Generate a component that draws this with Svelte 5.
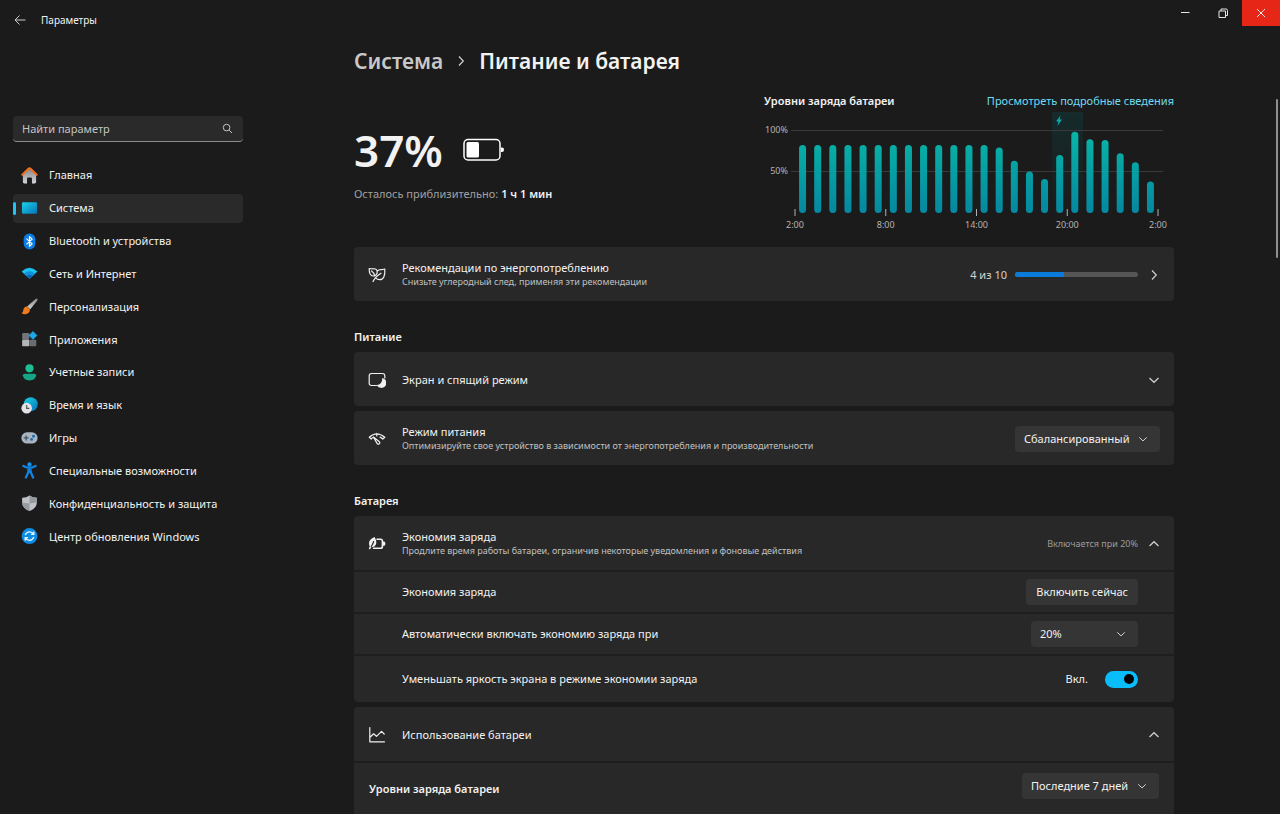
<script lang="ts">
	let search = $state('');
	let powerMode = $state('balanced');
	let saverLevel = $state('20');
	let period = $state('7');
	let dimScreen = $state(true);
	let activePage = $state('system');

	const pages = [
		{ id: 'home', label: 'Главная' },
		{ id: 'system', label: 'Система' },
		{ id: 'bluetooth', label: 'Bluetooth и устройства' },
		{ id: 'network', label: 'Сеть и Интернет' },
		{ id: 'personal', label: 'Персонализация' },
		{ id: 'apps', label: 'Приложения' },
		{ id: 'accounts', label: 'Учетные записи' },
		{ id: 'time', label: 'Время и язык' },
		{ id: 'games', label: 'Игры' },
		{ id: 'access', label: 'Специальные возможности' },
		{ id: 'privacy', label: 'Конфиденциальность и защита' },
		{ id: 'update', label: 'Центр обновления Windows' }
	];

	// battery level per hour, percent
	const levels = [82, 82, 82, 82, 82, 82, 82, 82, 82, 82, 82, 82, 82, 79, 63, 50, 41, 70, 98, 89, 88, 72, 61, 38];
	const hours = ['2:00', '8:00', '14:00', '20:00', '2:00'];
	const step = 363 / 24;

	const barHeight = (level: number) => level * 0.83;
</script>

{#snippet chevron(dir: string)}
	<svg class="chevron {dir}" viewBox="0 0 12 12" aria-hidden="true">
		<path d="M1.5 4 L6 8.3 L10.5 4" />
	</svg>
{/snippet}

{#snippet navIcon(id: string)}
	<svg class="nav-icon" viewBox="0 0 18 18" aria-hidden="true">
		{#if id === 'home'}
			<path d="M2 8 L9 2 L16 8 V16 Q16 17.5 14.5 17.5 H11.6 V12 Q11.6 11 10.6 11 H7.4 Q6.4 11 6.4 12 V17.5 H3.5 Q2 17.5 2 16Z" fill="url(#g-grey)" />
			<path d="M1.4 8.2 L8.2 1.7 Q9 1 9.8 1.7 L16.6 8.2" fill="none" stroke="#f4701c" stroke-width="2.2" stroke-linecap="round" stroke-linejoin="round" />
		{:else if id === 'system'}
			<rect x="1" y="2.5" width="16" height="12" rx="1.2" fill="url(#g-cyan)" />
		{:else if id === 'bluetooth'}
			<rect x="2.8" y=".4" width="12.4" height="17" rx="6.2" fill="#0a7ce4" />
			<path d="M5.8 6 L11.8 11.5 L9 14.2 V3.8 L11.8 6.5 L5.8 12" fill="none" stroke="#fff" stroke-width="1.3" stroke-linejoin="round" />
		{:else if id === 'network'}
			<path d="M.6 6.8 Q9 -1 17.4 6.8 L9 14.6Z" fill="#19c3ee" />
			<path d="M3.2 9.2 Q9 4 14.8 9.2 L9 14.6Z" fill="#1290da" />
			<path d="M6 11.8 Q9 9 12 11.8 L9 14.6Z" fill="#0b62b4" />
		{:else if id === 'personal'}
			<path d="M17 .6 Q18 1.6 17.1 2.8 L9.8 12 L6.4 9 L15.4 1 Q16.4 .3 17 .6Z" fill="url(#g-grey)" />
			<path d="M6.2 9.1 L9.5 12.2 Q9.2 16.7 4.5 17.2 Q2.4 17.3 .6 16.2 Q2.3 15.2 2.5 12.8 Q3 9.3 6.2 9.1Z" fill="#f47b1a" />
		{:else if id === 'apps'}
			<rect x="1.2" y="2" width="7.6" height="7.2" rx="1" fill="#70757b" />
			<rect x="1.2" y="9.2" width="7.6" height="7" rx="1" fill="#b4b6b9" />
			<rect x="8.8" y="9.2" width="7.4" height="7" rx="1" fill="#696d73" />
			<path d="M12.7 .6 L16.8 4.7 L12.7 8.8 L8.6 4.7Z" fill="#20a7e8" stroke="#20a7e8" stroke-linejoin="round" />
		{:else if id === 'accounts'}
			<circle cx="9" cy="4.6" r="4.3" fill="#1fbd94" />
			<path d="M4 10.2 H14 Q16 10.2 16 12 Q15.7 17.4 9 17.4 Q2.3 17.4 2 12 Q2 10.2 4 10.2Z" fill="#13a585" />
		{:else if id === 'time'}
			<circle cx="10.3" cy="7.7" r="7.4" fill="url(#g-cyan)" />
			<circle cx="6" cy="11.8" r="5.6" fill="#e1e3e6" />
			<path d="M6 8.6 V12 H8.8" fill="none" stroke="#555" stroke-width="1.2" />
		{:else if id === 'games'}
			<rect x=".4" y="2.4" width="17.2" height="12" rx="6" fill="#a9b4c0" />
			<path d="M5.5 5.8 V11 M2.9 8.4 H8.1" stroke="#49525d" stroke-width="1.4" />
			<circle cx="13.3" cy="6.6" r="1.5" fill="#1b6cae" />
			<circle cx="11.2" cy="10" r="1.5" fill="#1b6cae" />
		{:else if id === 'access'}
			<circle cx="9" cy="2.6" r="2.3" fill="#1690e8" />
			<path d="M2.6 4.2 Q9 8.2 15.4 4.2 M8.2 6.8 L7.6 11 L5.2 16.4 M9.8 6.8 L10.4 11 L12.8 16.4 M9 6.8 V10.5" fill="none" stroke="#1183df" stroke-width="2.5" stroke-linecap="round" stroke-linejoin="round" />
		{:else if id === 'privacy'}
			<path d="M9 .6 Q12 3 16.8 3 V8 Q16.6 14 9 17 Q1.4 14 1.2 8 V3 Q6 3 9 .6Z" fill="#bfc3c7" />
			<path d="M9 .6 Q12 3 16.8 3 V8 L9 9Z M1.2 8 L9 9 V17 Q1.4 14 1.2 8Z" fill="#969ba1" />
		{:else}
			<circle cx="9" cy="8.5" r="8.4" fill="#0d8ce4" />
			<path d="M4.4 7.5 Q5.8 4 9 4 Q12 4 13.4 6.5 M13.6 3.6 V6.7 H10.5 M13.6 9.5 Q12.2 13 9 13 Q6 13 4.6 10.5 M4.4 13.4 V10.3 H7.5" fill="none" stroke="#e8f6ff" stroke-width="1.3" />
		{/if}
	</svg>
{/snippet}

<svg class="defs" aria-hidden="true">
	<defs>
		<linearGradient id="g-grey" x1="0" y1="0" x2="0" y2="1">
			<stop offset="0" stop-color="#85898e" />
			<stop offset="1" stop-color="#d2d4d6" />
		</linearGradient>
		<linearGradient id="g-cyan" x1="0" y1="0" x2="1" y2="1">
			<stop offset="0" stop-color="#18d3e6" />
			<stop offset="1" stop-color="#0873b8" />
		</linearGradient>
	</defs>
</svg>

<div class="window">
	<header class="titlebar">
		<button class="back" aria-label="Назад">
			<svg viewBox="0 0 12 12"><path d="M11.5 6 H1 M5.5 1.5 L1 6 L5.5 10.5" /></svg>
		</button>
		<span class="app-name">Параметры</span>
		<div class="window-buttons">
			<button aria-label="Свернуть"><svg viewBox="0 0 10 10"><path d="M1 4.5 H9.5" /></svg></button>
			<button aria-label="Восстановить">
				<svg viewBox="0 0 10 10"><path d="M1 3 H7.5 V9.5 H1Z M3 3 V1 H8 Q9.5 1 9.5 2.5 V7.5 H7.5" /></svg>
			</button>
			<button class="close" aria-label="Закрыть"><svg viewBox="0 0 10 10"><path d="M1 1 L9 9 M9 1 L1 9" /></svg></button>
		</div>
	</header>

	<div class="body">
		<aside class="sidebar">
			<label class="search">
				<input type="text" placeholder="Найти параметр" aria-label="Найти параметр" bind:value={search} />
				<svg viewBox="0 0 12 12" aria-hidden="true"><circle cx="5" cy="5" r="3.6" /><path d="M7.7 7.7 L11 11" /></svg>
			</label>
			<nav>
				{#each pages as page (page.id)}
					<button class="nav-item" class:active={activePage === page.id} onclick={() => (activePage = page.id)}>
						{@render navIcon(page.id)}
						<span>{page.label}</span>
					</button>
				{/each}
			</nav>
		</aside>

		<main>
			<div class="content">
				<h1>
					<a href="#system">Система</a>
					{@render chevron('right')}
					<span>Питание и батарея</span>
				</h1>

				<section class="overview">
					<div class="charge">
						<div class="charge-level">
							<strong>37%</strong>
							<svg class="battery" viewBox="0 0 42 24" aria-hidden="true">
								<rect x="1" y="1.5" width="36" height="20.5" rx="4" fill="none" stroke="#fff" stroke-width="1.5" />
								<rect x="3.5" y="4" width="12.5" height="15.5" rx="1.5" fill="#fff" />
								<path d="M38 9.5 H39 Q41 9.5 41 11.7 Q41 14 39 14 H38Z" fill="#fff" />
							</svg>
						</div>
						<p>Осталось приблизительно: <b>1 ч 1 мин</b></p>
					</div>

					<div class="levels">
						<div class="levels-head">
							<h2>Уровни заряда батареи</h2>
							<a href="#details">Просмотреть подробные сведения</a>
						</div>
						<svg class="chart" viewBox="0 0 410 120" role="img" aria-label="Уровни заряда батареи">
							<defs>
								<linearGradient id="bar" gradientUnits="userSpaceOnUse" x1="0" y1="20" x2="0" y2="101">
									<stop offset="0" stop-color="#08b5a6" />
									<stop offset="1" stop-color="#0588a0" />
								</linearGradient>
								<linearGradient id="charging" x1="0" y1="0" x2="0" y2="1">
									<stop offset="0" stop-color="#152b2c" />
									<stop offset="1" stop-color="#1b1b1b" />
								</linearGradient>
							</defs>
							<rect x="288" y="0" width="31" height="101" fill="url(#charging)" />
							<path class="grid" d="M27 18.5 H399 M27 59.5 H399" />
							<text x="24" y="21" text-anchor="end">100%</text>
							<text x="24" y="62" text-anchor="end">50%</text>
							<path d="M296.5 3.5 L292 9.5 H294.5 L293.5 14 L298 7.5 H295.5Z" fill="#10a9b0" />
							{#each levels as level, i}
								<rect x={31 + (i + 0.5) * step - 3.5} y={101 - barHeight(level)} width="7" height={barHeight(level)} rx="3.5" fill="url(#bar)" />
							{/each}
							{#each hours as hour, i}
								<path class="tick" d="M{31 + i * 6 * step} 97 v7" />
								<text x={31 + i * 6 * step} y="116" text-anchor="middle">{hour}</text>
							{/each}
						</svg>
					</div>
				</section>

				<button class="card row recommend">
					<svg class="icon" viewBox="0 0 18 18" aria-hidden="true">
						<path d="M1.2 2.5 Q1 9.8 5.2 10 Q9 9.8 9.2 6 Q9 2.4 5.5 2.8 Q3 2.8 1.2 2.5Z M3.5 5 Q6 6.5 6.8 10 M9.2 5.2 Q10.5 3.6 13 3.6 Q15 3.6 16.8 3 Q17.4 13.5 11.8 13.7 Q9 13.7 7.8 12 M5 15.5 Q7.5 10.5 13 7.2" />
					</svg>
					<span class="text">
						<span>Рекомендации по энергопотреблению</span>
						<small>Снизьте углеродный след, применяя эти рекомендации</small>
					</span>
					<span class="count">4 из 10</span>
					<progress max="10" value="4" aria-label="4 из 10"></progress>
					{@render chevron('right')}
				</button>

				<h2 class="group">Питание</h2>
				<button class="card row">
					<svg class="icon" viewBox="0 0 18 18" aria-hidden="true">
						<path d="M8.5 14.5 H3.5 Q1.2 14.5 1.2 12.2 V4.8 Q1.2 2.5 3.5 2.5 H14.5 Q16.8 2.5 16.8 4.8 V7" />
						<path class="solid" d="M14.3 7 A5 5 0 1 1 8.8 14 Q14.3 13.5 14.3 7Z" />
					</svg>
					<span class="text">Экран и спящий режим</span>
					{@render chevron('down')}
				</button>
				<div class="card row">
					<svg class="icon" viewBox="0 0 18 18" aria-hidden="true">
						<path d="M1.3 7.3 Q8.5 .3 16.8 7.3 L14.8 9 Q13.5 7.6 12 7.1 M1.3 7.3 L3.2 9 Q4 8.2 5 7.6 M8.8 3.3 V6 M5.4 7 L9.2 13.6 A1.4 1.4 0 0 0 11.4 11.8Z" />
					</svg>
					<label class="text" for="mode">
						<span>Режим питания</span>
						<small>Оптимизируйте свое устройство в зависимости от энергопотребления и производительности</small>
					</label>
					<span class="select mode">
						<select id="mode" bind:value={powerMode}>
							<option value="balanced">Сбалансированный</option>
							<option value="best">Макс. производительность</option>
						</select>
						{@render chevron('down')}
					</span>
				</div>

				<h2 class="group">Батарея</h2>
				<div class="card">
					<button class="row">
						<svg class="icon" viewBox="0 0 18 18" aria-hidden="true">
							<path class="thick" d="M9 4.2 H12.5 Q14.4 4.2 14.4 6 V11.4 Q14.4 13.2 12.5 13.2 H5.5" />
							<path class="solid" d="M15 6.6 H16.3 Q17.4 7 17.4 8.7 Q17.4 10.4 16.3 10.8 H15Z M6.6 2 Q9.2 6.5 7.9 9.4 Q6.7 12.4 3.5 12 L1.9 14.4 L.8 13.8 L1.7 11.4 Q-1 5 6.6 2Z" />
							<path class="vein" d="M3.2 11.5 Q5 9.2 5.6 6.5" />
						</svg>
						<span class="text">
							<span>Экономия заряда</span>
							<small>Продлите время работы батареи, ограничив некоторые уведомления и фоновые действия</small>
						</span>
						<small class="state">Включается при 20%</small>
						{@render chevron('up')}
					</button>
					<div class="row sub">
						<span class="text">Экономия заряда</span>
						<button class="btn">Включить сейчас</button>
					</div>
					<div class="row sub">
						<label class="text" for="level">Автоматически включать экономию заряда при</label>
						<span class="select level">
							<select id="level" bind:value={saverLevel}>
								<option value="10">10%</option>
								<option value="20">20%</option>
								<option value="30">30%</option>
							</select>
							{@render chevron('down')}
						</span>
					</div>
					<div class="row sub tall">
						<label class="text" for="dim">Уменьшать яркость экрана в режиме экономии заряда</label>
						<span>{dimScreen ? 'Вкл.' : 'Откл.'}</span>
						<input class="toggle" type="checkbox" role="switch" id="dim" bind:checked={dimScreen} />
					</div>
				</div>

				<div class="card">
					<button class="row">
						<svg class="icon" viewBox="0 0 18 18" aria-hidden="true">
							<path d="M1.8 1.5 V15.8 H16.5 M2 11.3 L5.6 7.8 L8.5 10.3 L13.5 5.3 L16.2 8" />
						</svg>
						<span class="text">Использование батареи</span>
						{@render chevron('up')}
					</button>
					<div class="row usage">
						<label class="text" for="period">Уровни заряда батареи</label>
						<span class="select period">
							<select id="period" bind:value={period}>
								<option value="1">Последние 24 часа</option>
								<option value="7">Последние 7 дней</option>
							</select>
							{@render chevron('down')}
						</span>
					</div>
				</div>
			</div>
		</main>
	</div>
	<div class="scroll-thumb"></div>
</div>

<style>
	:global(body) {
		margin: 0;
		background: #1b1b1b;
	}

	.window {
		position: relative;
		display: flex;
		flex-direction: column;
		height: 100vh;
		overflow: hidden;
		background: #1b1b1b;
		color: #f2f2f2;
		font-family: 'Noto Sans', 'Open Sans', sans-serif;
		font-size: 11px;
		line-height: 16px;
	}

	.defs {
		position: absolute;
		width: 0;
		height: 0;
	}

	button,
	input,
	select {
		font: inherit;
		color: inherit;
		background: none;
		border: none;
		margin: 0;
		padding: 0;
		text-align: left;
	}

	svg {
		flex: none;
		display: block;
	}

	h1,
	h2,
	p {
		margin: 0;
	}

	a {
		text-decoration: none;
	}

	.titlebar {
		display: flex;
		align-items: center;
		flex: none;
		height: 40px;
		padding-left: 14px;
	}

	.back svg {
		width: 12px;
		height: 12px;
		fill: none;
		stroke: #ccc;
	}

	.app-name {
		margin-left: 15px;
		font-size: 10px;
	}

	.window-buttons {
		display: flex;
		align-self: flex-start;
		margin-left: auto;
	}

	.window-buttons button {
		display: flex;
		align-items: center;
		justify-content: center;
		width: 38px;
		height: 26px;
	}

	.window-buttons svg {
		width: 10px;
		height: 10px;
		fill: none;
		stroke: #e6e6e6;
	}

	.window-buttons .close {
		background: #e62617;
	}

	.body {
		display: flex;
		flex: 1;
		min-height: 0;
	}

	.sidebar {
		flex: none;
		width: 230px;
		padding: 76px 0 0 13px;
	}

	.search {
		display: flex;
		align-items: center;
		height: 25px;
		padding: 0 10px 0 9px;
		background: #2a2a2a;
		border-bottom: 1px solid #8c8c8c;
		border-radius: 4px;
	}

	.search input {
		flex: 1;
		min-width: 0;
		outline: none;
	}

	.search input::placeholder {
		color: #c4c4c4;
		opacity: 1;
	}

	.search svg {
		width: 11px;
		height: 11px;
		fill: none;
		stroke: #d0d0d0;
	}

	nav {
		display: grid;
		grid-auto-rows: 1fr;
		gap: 4px;
		height: 390px;
		margin-top: 19px;
	}

	.nav-item {
		position: relative;
		display: flex;
		align-items: center;
		gap: 11px;
		padding-left: 8px;
		border-radius: 4px;
	}

	.nav-item.active {
		background: #2a2a2a;
	}

	.nav-item.active::before {
		content: '';
		position: absolute;
		left: 0;
		width: 3px;
		height: 13px;
		border-radius: 2px;
		background: #20c4f4;
	}

	.nav-icon {
		width: 17px;
		height: 17px;
	}

	main {
		flex: 1;
		min-width: 0;
		overflow-y: auto;
		scrollbar-width: none;
		padding: 6px 106px 0 111px;
	}

	.content {
		max-width: 1000px;
	}

	h1 {
		display: flex;
		align-items: center;
		gap: 12px;
		font-size: 21px;
		line-height: 30px;
		font-weight: 600;
	}

	h1 a {
		color: #c8c8c8;
	}

	h2 {
		font-size: 11px;
		line-height: 16px;
		font-weight: 600;
	}

	.chevron {
		width: 12px;
		height: 12px;
		fill: none;
		stroke: #d0d0d0;
		stroke-width: 1.2;
	}

	.chevron.up {
		transform: rotate(180deg);
	}

	.chevron.right {
		transform: rotate(-90deg);
	}

	.overview {
		display: flex;
		justify-content: space-between;
		margin-top: 17px;
	}

	.charge {
		padding-top: 26px;
	}

	.charge-level {
		display: flex;
		align-items: center;
		gap: 20px;
	}

	.charge-level strong {
		font-size: 44px;
		line-height: 62px;
		font-weight: 600;
	}

	.battery {
		width: 42px;
		height: 24px;
	}

	.charge p {
		margin-top: 5px;
		color: #a0a0a0;
	}

	.charge b {
		font-weight: 600;
		color: #f2f2f2;
	}

	.levels {
		width: 410px;
	}

	.levels-head {
		display: flex;
		justify-content: space-between;
	}

	.levels-head a {
		color: #6fdcf0;
	}

	.chart {
		width: 100%;
		margin-top: 3px;
	}

	.chart text {
		fill: #b4b4b4;
		font-size: 9px;
	}

	.grid {
		stroke: #3a3a3a;
	}

	.tick {
		stroke: #b0b0b0;
	}

	.card {
		box-sizing: border-box;
		width: 100%;
		margin-bottom: 5px;
		background: #282828;
		border-radius: 4px;
	}

	.row {
		box-sizing: border-box;
		display: flex;
		align-items: center;
		width: 100%;
		min-height: 54px;
		padding: 1px 14px 0;
	}

	.card .row + .row {
		border-top: 2px solid #1e1e1e;
	}

	.recommend {
		margin-top: 15px;
	}

	.icon {
		width: 18px;
		height: 18px;
		margin-right: 16px;
		fill: none;
		stroke: #f0f0f0;
		stroke-width: 1.2;
		stroke-linecap: round;
		stroke-linejoin: round;
	}

	.icon .solid {
		fill: #f0f0f0;
		stroke: none;
	}

	.icon .thick {
		stroke-width: 1.6;
	}

	.icon .vein {
		stroke: #282828;
	}

	.text {
		display: flex;
		flex-direction: column;
		flex: 1;
		min-width: 0;
		line-height: 14px;
	}

	small {
		font-size: 9px;
		color: #c0c0c0;
	}

	.count {
		color: #d4d4d4;
	}

	progress {
		appearance: none;
		width: 123px;
		height: 5px;
		margin: 0 10px 0 8px;
		border: none;
		border-radius: 3px;
		overflow: hidden;
		background: #555;
	}

	progress::-webkit-progress-bar {
		background: #555;
	}

	progress::-webkit-progress-value {
		background: #0a7bd8;
	}

	.group {
		margin: 28px 0 7px;
	}

	.sub {
		min-height: 42px;
		padding: 0 36px 0 48px;
	}

	.tall {
		min-height: 48px;
	}

	.state {
		margin-right: 10px;
		color: #9c9c9c;
	}

	.btn,
	.select {
		height: 26px;
		background: #353535;
		border-radius: 4px;
	}

	.btn {
		padding: 0 10px;
	}

	.select {
		position: relative;
	}

	.select select {
		appearance: none;
		width: 100%;
		height: 26px;
		padding: 0 26px 0 9px;
		border-radius: 4px;
	}

	.select option {
		background: #353535;
	}

	.select .chevron {
		position: absolute;
		top: 8px;
		right: 12px;
		width: 10px;
		height: 10px;
		pointer-events: none;
	}

	.mode {
		width: 145px;
	}

	.level {
		width: 107px;
	}

	.period {
		width: 137px;
	}

	.toggle {
		appearance: none;
		display: flex;
		align-items: center;
		box-sizing: border-box;
		width: 33px;
		height: 17px;
		margin-left: 17px;
		padding: 0 4px;
		border-radius: 9px;
		background: #666;
	}

	.toggle::before {
		content: '';
		width: 10px;
		height: 10px;
		border-radius: 5px;
		background: #000;
	}

	.toggle:checked {
		justify-content: flex-end;
		background: #09bdfb;
	}

	.usage {
		align-items: flex-start;
		min-height: 90px;
		padding: 10px 15px;
	}

	.usage .text {
		line-height: 32px;
		font-weight: 600;
	}

	.scroll-thumb {
		position: absolute;
		top: 99px;
		right: 2px;
		width: 2px;
		height: 159px;
		border-radius: 1px;
		background: #8f8f8f;
	}
</style>
